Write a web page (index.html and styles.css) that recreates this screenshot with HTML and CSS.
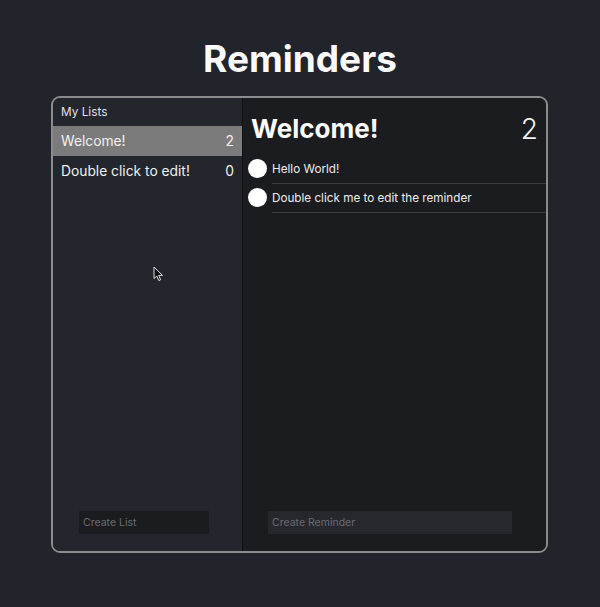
FILE: index.html
```html
<!DOCTYPE html>
<html lang="en">
<head>
    <meta charset="UTF-8">
    <meta name="viewport" content="width=device-width, initial-scale=1.0">
    <title>Reminders</title>
    <link rel="stylesheet" href="styles.css">
</head>
<body>
    <h1 class="title">Reminders</h1>

    <div class="window">
        <aside class="sidebar">
            <div class="sidebar-head">My Lists</div>
            <ul class="lists">
                <li class="list selected"><span>Welcome!</span><span>2</span></li>
                <li class="list"><span>Double click to edit!</span><span>0</span></li>
            </ul>
            <div class="sidebar-foot">
                <input class="create-list" type="text" placeholder="Create List">
            </div>
        </aside>

        <main class="detail">
            <div class="detail-head">
                <h2>Welcome!</h2>
                <span class="count">2</span>
            </div>
            <ul class="reminders">
                <li class="reminder"><span class="check"></span><span class="label">Hello World!</span></li>
                <li class="reminder"><span class="check"></span><span class="label">Double click me to edit the reminder</span></li>
            </ul>
            <div class="detail-foot">
                <input class="create-reminder" type="text" placeholder="Create Reminder">
            </div>
        </main>
    </div>

    <!-- mouse pointer -->
    <svg class="cursor" width="12" height="16" viewBox="0 0 12 16">
        <path d="M1 1 L1 12.5 L3.8 10 L5.8 14.6 L7.6 13.8 L5.7 9.4 L9.5 9.4 Z" fill="#111" stroke="#ddd" stroke-width="1"/>
    </svg>
</body>
</html>
```

FILE: styles.css
```css
body {
    margin: 0;
    background-color: #22242b;
    font-family: Inter, "Noto Sans", sans-serif;
    color: #ececec;
    height: 607px;
    position: relative;
}

.title { margin: 0; padding-top: 37px; height: 59px; text-align: center; font-size: 37px; font-weight: 700; color: #fafafa; line-height: 44px; }

.window { width: 493px; height: 453px; margin: 0 0 0 51px; display: flex; border: 2px solid #8c8c8e; border-radius: 9px; overflow: hidden; }

.sidebar { width: 189px; background: #24262d; border-right: 1px solid #0f1013; display: flex; flex-direction: column; }
.sidebar-head { height: 28px; line-height: 28px; padding-left: 8px; font-size: 11.8px; color: #e2e2e2; }
.lists { list-style: none; margin: 0; padding: 0; flex: 1; }
.list { height: 30px; display: flex; align-items: center; justify-content: space-between; padding: 0 8px; font-size: 13.8px; color: #f0f0f0; }
.list.selected { background: #7b7b7c; }
.sidebar-foot { padding: 0 0 17px 26px; }
.create-list { width: 130px; height: 23px; box-sizing: border-box; border: none; background: #1b1c20; color: #ddd; font-family: inherit; font-size: 10.5px; padding: 0 4px; outline: none; }
.create-list::placeholder { color: #6a6b70; }

.detail { flex: 1; background: #1b1c20; display: flex; flex-direction: column; }
.detail-head { height: 56px; box-sizing: border-box; padding: 5px 8px 0 8px; display: flex; align-items: center; justify-content: space-between; }
.detail-head h2 { margin: 0; font-size: 26px; font-weight: 700; color: #fafafa; }
.count { font-size: 28px; font-weight: 300; color: #f2f2f2; }
.reminders { list-style: none; margin: 0; padding: 0; flex: 1; }
.reminder { height: 29px; display: flex; align-items: center; }
.check { width: 19px; height: 19px; border-radius: 50%; background: #fff; margin: 0 5px 0 5px; flex: none; }
.label { flex: 1; height: 29px; line-height: 28px; border-bottom: 1px solid #3c3d42; box-sizing: border-box; font-size: 11.7px; color: #ececec; margin-top: 1px; }
.detail-foot { padding: 0 0 17px 25px; }
.create-reminder { width: 244px; height: 23px; box-sizing: border-box; border: none; background: #27282e; color: #ddd; font-family: inherit; font-size: 10.5px; padding: 0 4px; outline: none; }
.create-reminder::placeholder { color: #6a6b70; }

.cursor { position: absolute; left: 153px; top: 266px; }
```
